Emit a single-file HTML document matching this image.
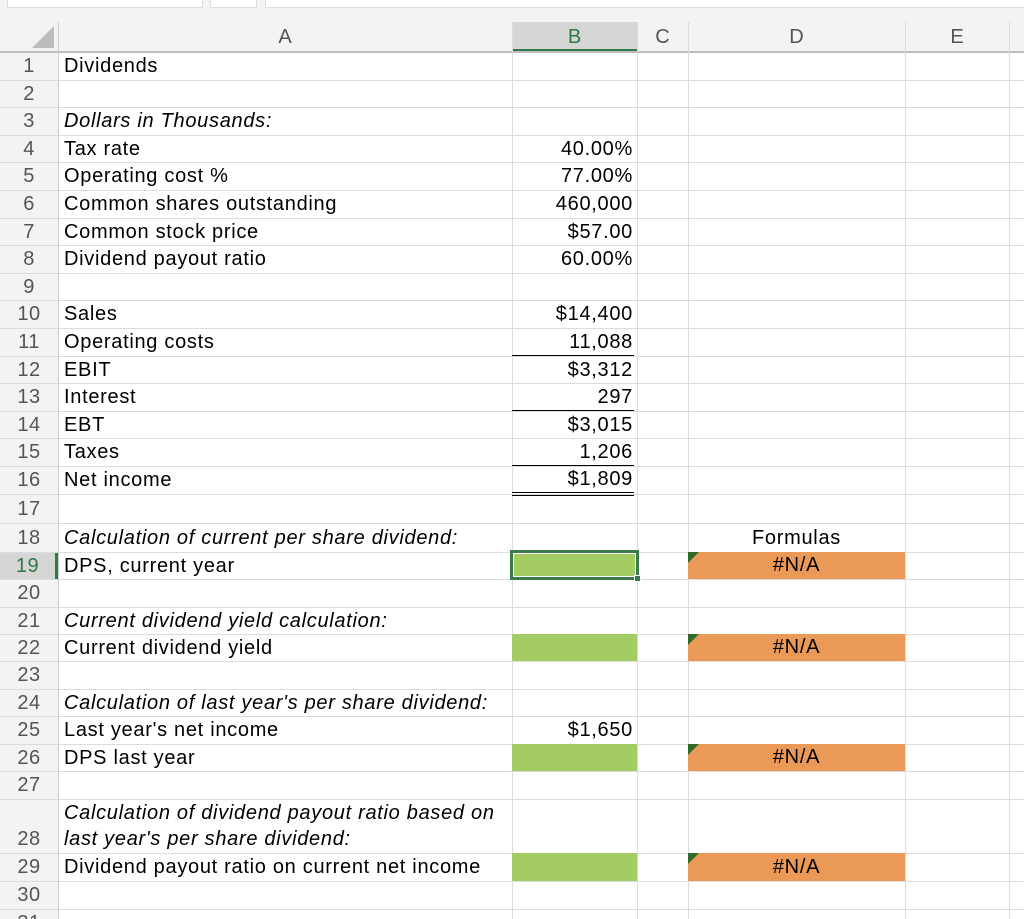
<!DOCTYPE html>
<html><head><meta charset="utf-8"><style>
*{margin:0;padding:0;box-sizing:border-box}
html,body{width:1024px;height:919px;overflow:hidden}
body{background:#fff;font-family:"Liberation Sans",Arial,sans-serif;position:relative}
.a{position:absolute}
.hl{position:absolute;left:0;width:1024px;height:1px;background:#dcdcdc}
.vl{position:absolute;top:22px;width:1px;height:897px;background:#dcdcdc}
.rn{position:absolute;left:0;width:58px;text-align:center;font-size:20px;color:#555;background:#f3f3f3;letter-spacing:0.5px}
.t{position:absolute;font-size:20px;letter-spacing:0.7px;color:#000;white-space:nowrap;display:flex;align-items:center}
.l{left:64px}
.r{left:500px;width:133px;justify-content:flex-end}
.i{font-style:italic}
.ch{position:absolute;top:22px;height:30px;line-height:30px;text-align:center;font-size:20px;color:#555}
.g{position:absolute;left:512px;width:125px;background:#a3cd62}
.o{position:absolute;left:688px;width:217px;background:#ea9956;font-size:20px;letter-spacing:0.7px;text-align:center;color:#000}
.o:before{content:"";position:absolute;left:0;top:0;border-top:11px solid #2f6b2a;border-right:11px solid transparent}
.ul{position:absolute;left:512px;width:122px;height:1px;background:#000}
</style></head><body>
<div class="a" style="left:0;top:0;width:1024px;height:22px;background:#f3f3f3"></div>
<div class="a" style="left:7px;top:-2px;width:196px;height:10px;background:#fff;border:1px solid #ddd"></div>
<div class="a" style="left:210px;top:-2px;width:47px;height:10px;background:#fff;border:1px solid #ddd"></div>
<div class="a" style="left:265px;top:-2px;width:770px;height:10px;background:#fff;border:1px solid #ddd"></div>
<div class="a" style="left:0;top:22px;width:1024px;height:30px;background:#f3f3f3"></div>
<div class="a" style="left:512px;top:22px;width:125px;height:30px;background:#d6d6d6;border-bottom:3px solid #2f7a45"></div>
<div class="a" style="left:0;top:51px;width:1024px;height:2px;background:#bdbdbd"></div>
<svg class="a" style="left:30px;top:24px" width="26" height="26"><polygon points="2,24 24,24 24,2" fill="#bcbcbc"/></svg>
<div class="ch" style="left:58px;width:454px">A</div>
<div class="ch" style="left:512px;width:125px;color:#2f7a45">B</div>
<div class="ch" style="left:637px;width:51px">C</div>
<div class="ch" style="left:688px;width:217px">D</div>
<div class="ch" style="left:905px;width:104px">E</div>
<div class="a" style="left:0;top:53px;width:58px;height:866px;background:#f3f3f3"></div>
<div class="vl" style="left:512px"></div>
<div class="vl" style="left:637px"></div>
<div class="vl" style="left:688px"></div>
<div class="vl" style="left:905px"></div>
<div class="vl" style="left:1009px"></div>
<div class="hl" style="top:80px"></div><div class="hl" style="top:107px"></div><div class="hl" style="top:135px"></div><div class="hl" style="top:162px"></div><div class="hl" style="top:190px"></div><div class="hl" style="top:218px"></div><div class="hl" style="top:245px"></div><div class="hl" style="top:273px"></div><div class="hl" style="top:300px"></div><div class="hl" style="top:328px"></div><div class="hl" style="top:356px"></div><div class="hl" style="top:383px"></div><div class="hl" style="top:411px"></div><div class="hl" style="top:438px"></div><div class="hl" style="top:466px"></div><div class="hl" style="top:494px"></div><div class="hl" style="top:523px"></div><div class="hl" style="top:552px"></div><div class="hl" style="top:579px"></div><div class="hl" style="top:607px"></div><div class="hl" style="top:634px"></div><div class="hl" style="top:661px"></div><div class="hl" style="top:689px"></div><div class="hl" style="top:716px"></div><div class="hl" style="top:744px"></div><div class="hl" style="top:771px"></div><div class="hl" style="top:799px"></div><div class="hl" style="top:853px"></div><div class="hl" style="top:881px"></div><div class="hl" style="top:909px"></div>
<div class="rn" style="top:53px;height:27px;line-height:27px">1</div>
<div class="rn" style="top:81px;height:26px;line-height:26px">2</div>
<div class="rn" style="top:108px;height:27px;line-height:27px">3</div>
<div class="rn" style="top:136px;height:26px;line-height:26px">4</div>
<div class="rn" style="top:163px;height:27px;line-height:27px">5</div>
<div class="rn" style="top:191px;height:27px;line-height:27px">6</div>
<div class="rn" style="top:219px;height:26px;line-height:26px">7</div>
<div class="rn" style="top:246px;height:27px;line-height:27px">8</div>
<div class="rn" style="top:274px;height:26px;line-height:26px">9</div>
<div class="rn" style="top:301px;height:27px;line-height:27px">10</div>
<div class="rn" style="top:329px;height:27px;line-height:27px">11</div>
<div class="rn" style="top:357px;height:26px;line-height:26px">12</div>
<div class="rn" style="top:384px;height:27px;line-height:27px">13</div>
<div class="rn" style="top:412px;height:26px;line-height:26px">14</div>
<div class="rn" style="top:439px;height:27px;line-height:27px">15</div>
<div class="rn" style="top:467px;height:27px;line-height:27px">16</div>
<div class="rn" style="top:495px;height:28px;line-height:28px">17</div>
<div class="rn" style="top:524px;height:28px;line-height:28px">18</div>
<div class="rn" style="top:553px;height:26px;line-height:26px;background:#d6d6d6;color:#2f7a45;border-right:3px solid #2f7a45">19</div>
<div class="rn" style="top:580px;height:27px;line-height:27px">20</div>
<div class="rn" style="top:608px;height:26px;line-height:26px">21</div>
<div class="rn" style="top:635px;height:26px;line-height:26px">22</div>
<div class="rn" style="top:662px;height:27px;line-height:27px">23</div>
<div class="rn" style="top:690px;height:26px;line-height:26px">24</div>
<div class="rn" style="top:717px;height:27px;line-height:27px">25</div>
<div class="rn" style="top:745px;height:26px;line-height:26px">26</div>
<div class="rn" style="top:772px;height:27px;line-height:27px">27</div>
<div class="rn" style="top:800px;height:53px;line-height:26px;padding-top:26px">28</div>
<div class="rn" style="top:854px;height:27px;line-height:27px">29</div>
<div class="rn" style="top:882px;height:27px;line-height:27px">30</div>
<div class="rn" style="top:910px;height:9px;line-height:26px;overflow:hidden">31</div>
<div class="a" style="left:58px;top:22px;width:1px;height:897px;background:#cfcfcf"></div>
<div class="g" style="top:552px;height:27px"></div>
<div class="a" style="left:510px;top:550px;width:129px;height:30px;border:3px solid #3b7a4c"></div>
<div class="a" style="left:513px;top:553px;width:123px;height:24px;border:1px solid #fff"></div>
<div class="a" style="left:634px;top:575px;width:7px;height:7px;background:#3b7a4c;border:1px solid #fff"></div>
<div class="g" style="top:634px;height:27px"></div>
<div class="g" style="top:744px;height:27px"></div>
<div class="g" style="top:853px;height:28px"></div>
<div class="o" style="top:552px;height:27px;line-height:27px">#N/A</div>
<div class="o" style="top:634px;height:27px;line-height:27px">#N/A</div>
<div class="o" style="top:744px;height:27px;line-height:27px">#N/A</div>
<div class="o" style="top:853px;height:28px;line-height:28px">#N/A</div>
<div class="ul" style="top:355px"></div>
<div class="ul" style="top:410px"></div>
<div class="ul" style="top:465px"></div>
<div class="ul" style="top:492px"></div>
<div class="ul" style="top:495px"></div>
<div class="t l" style="top:53px;height:27px">Dividends</div>
<div class="t l i" style="top:108px;height:27px">Dollars in Thousands:</div>
<div class="t l" style="top:136px;height:26px">Tax rate</div>
<div class="t l" style="top:163px;height:27px">Operating cost %</div>
<div class="t l" style="top:191px;height:27px">Common shares outstanding</div>
<div class="t l" style="top:219px;height:26px">Common stock price</div>
<div class="t l" style="top:246px;height:27px">Dividend payout ratio</div>
<div class="t l" style="top:301px;height:27px">Sales</div>
<div class="t l" style="top:329px;height:27px">Operating costs</div>
<div class="t l" style="top:357px;height:26px">EBIT</div>
<div class="t l" style="top:384px;height:27px">Interest</div>
<div class="t l" style="top:412px;height:26px">EBT</div>
<div class="t l" style="top:439px;height:27px">Taxes</div>
<div class="t l" style="top:467px;height:27px">Net income</div>
<div class="t l i" style="top:524px;height:28px">Calculation of current per share dividend:</div>
<div class="t l" style="top:553px;height:26px">DPS, current year</div>
<div class="t l i" style="top:608px;height:26px">Current dividend yield calculation:</div>
<div class="t l" style="top:635px;height:26px">Current dividend yield</div>
<div class="t l i" style="top:690px;height:26px">Calculation of last year's per share dividend:</div>
<div class="t l" style="top:717px;height:27px">Last year's net income</div>
<div class="t l" style="top:745px;height:26px">DPS last year</div>
<div class="t l i" style="top:800px;height:26px">Calculation of dividend payout ratio based on</div>
<div class="t l i" style="top:826px;height:26px">last year's per share dividend:</div>
<div class="t l" style="top:854px;height:27px">Dividend payout ratio on current net income</div>
<div class="t r" style="top:136px;height:26px">40.00%</div>
<div class="t r" style="top:163px;height:27px">77.00%</div>
<div class="t r" style="top:191px;height:27px">460,000</div>
<div class="t r" style="top:219px;height:26px">$57.00</div>
<div class="t r" style="top:246px;height:27px">60.00%</div>
<div class="t r" style="top:301px;height:27px">$14,400</div>
<div class="t r" style="top:329px;height:27px">11,088</div>
<div class="t r" style="top:357px;height:26px">$3,312</div>
<div class="t r" style="top:384px;height:27px">297</div>
<div class="t r" style="top:412px;height:26px">$3,015</div>
<div class="t r" style="top:439px;height:27px">1,206</div>
<div class="t r" style="top:466px;height:26px">$1,809</div>
<div class="t r" style="top:717px;height:27px">$1,650</div>
<div class="t" style="top:524px;height:28px;left:688px;width:217px;justify-content:center">Formulas</div>
</body></html>
